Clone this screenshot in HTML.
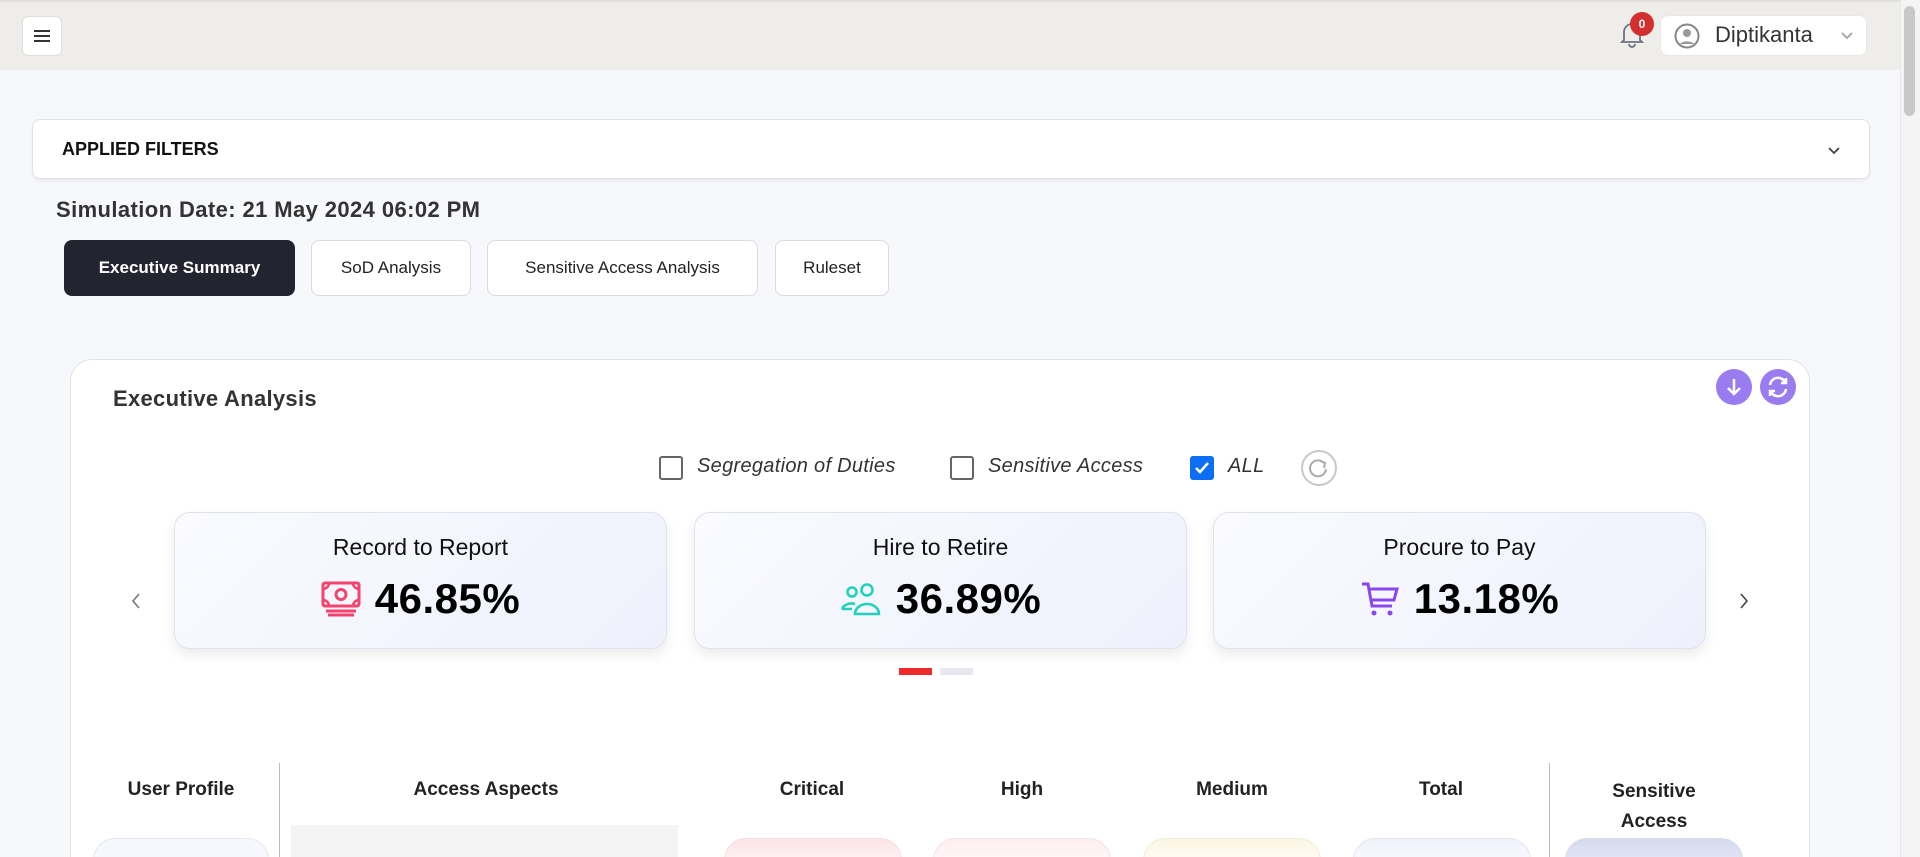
<!DOCTYPE html>
<html><head><meta charset="utf-8"><style>
*{box-sizing:border-box;margin:0;padding:0}
html{width:1920px;height:857px;overflow:hidden}
body{width:1920px;height:857px;overflow:hidden;background:#f7f8fc;font-family:"Liberation Sans",sans-serif;color:#222;position:relative}
.abs{position:absolute}
.hdr{left:0;top:0;width:1900px;height:70px;background:#efedea;border-top:2px solid #e2e0dd}
.sb{left:1900px;top:0;width:20px;height:857px;background:#f4f4f4;border-left:1px solid #e6e6e6}
.thumb{left:1904px;top:6px;width:11px;height:110px;background:#c8c8c8;border-radius:6px}
.btn{background:#fff;border:1px solid #dedede;border-radius:6px}
.tab{top:240px;height:56px;border-radius:8px;background:#fff;border:1px solid #dcdcdc;font-size:17px;display:flex;align-items:center;justify-content:center;color:#222}
.card{top:512px;width:493px;height:137px;border-radius:16px;background:linear-gradient(135deg,#fafbff,#eef0fc);border:1px solid #e0e2ee;box-shadow:0 6px 12px rgba(0,0,0,.08);text-align:center}
.card .t{margin-top:21px;font-size:23px;color:#111}
.card .v{margin-top:14px;font-size:42px;font-weight:bold;color:#000;display:flex;align-items:center;justify-content:center;gap:14px;letter-spacing:.5px}
.cb{width:24px;height:24px;border:2px solid #666;border-radius:3px;background:#fff}
.cl{font-size:20px;font-style:italic;color:#333;letter-spacing:.3px}
.th{font-size:19px;font-weight:bold;color:#222;text-align:center}
.pill{top:838px;height:40px;border-radius:22px 22px 0 0}
</style></head><body>
<div class="abs hdr"></div>
<div class="abs btn" style="left:22px;top:16px;width:40px;height:40px;display:flex;flex-direction:column;justify-content:center;align-items:center;gap:3px">
<div style="width:16px;height:2px;background:#333"></div><div style="width:16px;height:2px;background:#333"></div><div style="width:16px;height:2px;background:#333"></div></div>
<svg class="abs" style="left:1619px;top:19px" width="26" height="30" viewBox="0 0 26 30"><path d="M5 21V13a8 8 0 0 1 16 0v8l2 2H3z M10 25a3 3 0 0 0 6 0" fill="none" stroke="#6b7280" stroke-width="1.8"/></svg>
<div class="abs" style="left:1630px;top:12px;width:24px;height:24px;border-radius:50%;background:#d32f2f;color:#fff;font-size:12px;font-weight:bold;display:flex;align-items:center;justify-content:center">0</div>
<div class="abs btn" style="left:1660px;top:15px;width:207px;height:41px;border-radius:8px;border-color:#e8e8e8"></div>
<svg class="abs" style="left:1674px;top:23px" width="26" height="26" viewBox="0 0 26 26"><circle cx="13" cy="13" r="11.5" fill="none" stroke="#888" stroke-width="2"/><circle cx="13" cy="10" r="4" fill="#999"/><path d="M5.5 21a9 6 0 0 1 15 0z" fill="#999"/></svg>
<div class="abs" style="left:1715px;top:22px;font-size:22px;color:#333">Diptikanta</div>
<svg class="abs" style="left:1840px;top:31px" width="14" height="9" viewBox="0 0 14 9"><path d="M2 2l5 5 5-5" fill="none" stroke="#aaa" stroke-width="2"/></svg>
<div class="abs sb"></div><div class="abs thumb"></div>

<div class="abs" style="left:32px;top:119px;width:1838px;height:60px;background:#fff;border:1px solid #e2e2e2;border-radius:8px;box-shadow:0 2px 3px rgba(0,0,0,.05)"></div>
<div class="abs" style="left:62px;top:139px;font-size:18px;font-weight:bold;color:#111">APPLIED FILTERS</div>
<svg class="abs" style="left:1827px;top:146px" width="14" height="9" viewBox="0 0 14 9"><path d="M2 2l5 5 5-5" fill="none" stroke="#444" stroke-width="1.8"/></svg>
<div class="abs" style="left:56px;top:197px;font-size:22px;font-weight:bold;color:#333;letter-spacing:.4px">Simulation Date: 21 May 2024 06:02 PM</div>

<div class="abs tab" style="left:64px;width:231px;background:#23242f;border-color:#23242f;color:#fff;font-weight:bold">Executive Summary</div>
<div class="abs tab" style="left:311px;width:160px">SoD Analysis</div>
<div class="abs tab" style="left:487px;width:271px">Sensitive Access Analysis</div>
<div class="abs tab" style="left:775px;width:114px">Ruleset</div>

<div class="abs" style="left:70px;top:359px;width:1740px;height:520px;background:#fff;border:1px solid #e2e2e2;border-radius:22px"></div>
<div class="abs" style="left:113px;top:386px;font-size:22px;font-weight:bold;color:#333;letter-spacing:.3px">Executive Analysis</div>
<svg class="abs" style="left:1716px;top:369px" width="36" height="36" viewBox="0 0 36 36"><circle cx="18" cy="18" r="18" fill="#9a7cf0"/><path d="M18 10v15M12 19l6 6 6-6" fill="none" stroke="#fff" stroke-width="2.5"/></svg>
<svg class="abs" style="left:1760px;top:369px" width="36" height="36" viewBox="0 0 36 36"><circle cx="18" cy="18" r="18" fill="#9a7cf0"/><path d="M10 16a8 8 0 0 1 15-3M26 20a8 8 0 0 1-15 3" fill="none" stroke="#fff" stroke-width="2.5"/><path d="M26 9v5h-5M10 27v-5h5" fill="none" stroke="#fff" stroke-width="2.5"/></svg>

<div class="abs cb" style="left:659px;top:456px"></div>
<div class="abs cl" style="left:697px;top:455px">Segregation of Duties</div>
<div class="abs cb" style="left:950px;top:456px"></div>
<div class="abs cl" style="left:988px;top:455px">Sensitive Access</div>
<div class="abs cb" style="left:1190px;top:456px;background:#0b6ef5;border-color:#0b6ef5"><svg width="20" height="20" viewBox="0 0 20 20"><path d="M4 10l4 4 8-9" fill="none" stroke="#fff" stroke-width="2.6"/></svg></div>
<div class="abs cl" style="left:1228px;top:455px">ALL</div>
<svg class="abs" style="left:1300px;top:449px" width="38" height="38" viewBox="0 0 38 38"><circle cx="19" cy="19" r="17" fill="none" stroke="#c8c8c8" stroke-width="2"/><path d="M24 14a8 8 0 1 0 2 6" fill="none" stroke="#aaa" stroke-width="2"/><path d="M20 12l5 2-1 5" fill="none" stroke="#aaa" stroke-width="2"/></svg>

<svg class="abs" style="left:130px;top:592px" width="12" height="18" viewBox="0 0 12 18"><path d="M9 2L3 9l6 7" fill="none" stroke="#777" stroke-width="1.6"/></svg>
<svg class="abs" style="left:1738px;top:592px" width="12" height="18" viewBox="0 0 12 18"><path d="M3 2l6 7-6 7" fill="none" stroke="#444" stroke-width="1.6"/></svg>

<div class="abs card" style="left:174px"><div class="t">Record to Report</div><div class="v">
<svg width="40" height="38" viewBox="0 0 40 38"><rect x="2" y="3" width="36" height="23" rx="2" fill="none" stroke="#f4436c" stroke-width="3"/><circle cx="20" cy="14.5" r="5" fill="none" stroke="#f4436c" stroke-width="3"/><path d="M2 9a6 6 0 0 0 6-6M38 9a6 6 0 0 1-6-6M2 20a6 6 0 0 1 6 6M38 20a6 6 0 0 0-6 6" fill="none" stroke="#f4436c" stroke-width="2.5"/><path d="M5 31h30M7 35h26" stroke="#f4436c" stroke-width="3"/></svg>46.85%</div></div>
<div class="abs card" style="left:694px"><div class="t">Hire to Retire</div><div class="v">
<svg width="42" height="34" viewBox="0 0 42 34"><circle cx="12" cy="10" r="4.5" fill="none" stroke="#20d2be" stroke-width="2.6"/><circle cx="27" cy="8" r="5.5" fill="none" stroke="#20d2be" stroke-width="2.6"/><path d="M15 32a12 10 0 0 1 24 0z" fill="none" stroke="#20d2be" stroke-width="2.6"/><path d="M2 27a10 8 0 0 1 13-5M2 27h10" fill="none" stroke="#20d2be" stroke-width="2.6"/></svg>36.89%</div></div>
<div class="abs card" style="left:1213px"><div class="t">Procure to Pay</div><div class="v">
<svg width="40" height="36" viewBox="0 0 40 36"><path d="M2 3h6l4 22h20M9 8h28l-3 11H11" fill="none" stroke="#8b46f0" stroke-width="3"/><circle cx="14" cy="32" r="2.5" fill="#8b46f0"/><circle cx="30" cy="32" r="2.5" fill="#8b46f0"/></svg>13.18%</div></div>

<div class="abs" style="left:899px;top:668px;width:33px;height:7px;background:#ee2a2a"></div>
<div class="abs" style="left:940px;top:668px;width:33px;height:7px;background:#e6e8ee"></div>

<div class="abs" style="left:279px;top:763px;width:1px;height:100px;background:#bbb"></div>
<div class="abs" style="left:1549px;top:763px;width:1px;height:100px;background:#bbb"></div>
<div class="abs th" style="left:101px;top:779px;width:160px">User Profile</div>
<div class="abs th" style="left:386px;top:779px;width:200px">Access Aspects</div>
<div class="abs th" style="left:742px;top:779px;width:140px">Critical</div>
<div class="abs th" style="left:952px;top:779px;width:140px">High</div>
<div class="abs th" style="left:1162px;top:779px;width:140px">Medium</div>
<div class="abs th" style="left:1371px;top:779px;width:140px">Total</div>
<div class="abs th" style="left:1574px;top:777px;width:160px;line-height:30px">Sensitive<br>Access</div>
<div class="abs" style="left:291px;top:825px;width:387px;height:40px;background:#f4f4f4"></div>
<div class="abs pill" style="left:93px;width:176px;background:#f6f8fd;border:1px solid #e4e6ee"></div>
<div class="abs pill" style="left:724px;width:178px;background:linear-gradient(#fde4e6,#fff);border:1px solid #f2dede"></div>
<div class="abs pill" style="left:933px;width:178px;background:linear-gradient(#fdeef0,#fff);border:1px solid #f2e4e4"></div>
<div class="abs pill" style="left:1143px;width:178px;background:linear-gradient(#fdf6e4,#fff);border:1px solid #f2eedf"></div>
<div class="abs pill" style="left:1353px;width:178px;background:linear-gradient(#f0f2fb,#fff);border:1px solid #e4e6ee"></div>
<div class="abs pill" style="left:1565px;width:178px;background:linear-gradient(#d6d9ee,#eef0fb);border:1px solid #d8dbe8"></div>
</body></html>
